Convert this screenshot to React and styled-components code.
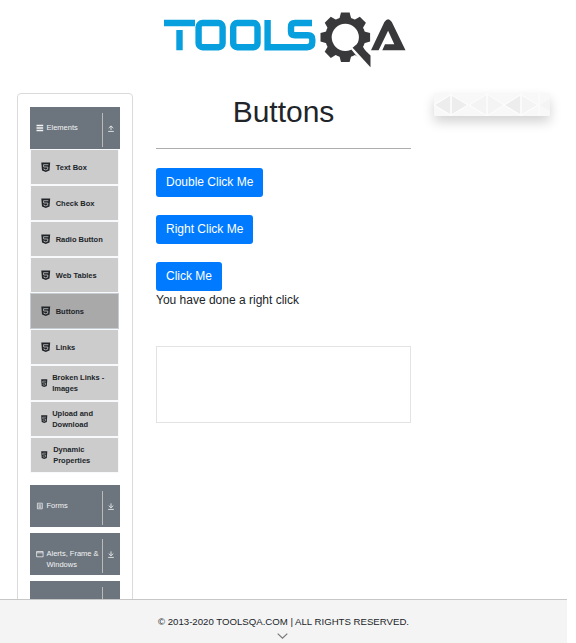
import React from 'react';
import styled, { createGlobalStyle, css } from 'styled-components';

const GlobalStyle = createGlobalStyle`
  *, *::before, *::after { box-sizing: border-box; }
  html, body { margin: 0; overflow: hidden; background: #fff; }
  body {
    font-family: "Liberation Sans", Arial, sans-serif;
    font-size: 12px;
    line-height: 18px;
    color: #212529;
  }
`;

const Page = styled.div`
  display: flex;
  flex-direction: column;
  width: 567px;
  height: 643px;
`;

const Header = styled.header`
  flex: none;
  display: flex;
  justify-content: center;
  height: 93px;
`;

const LogoSvg = styled.svg`
  display: block;
  width: 567px;
  height: 76px;
`;

const Body = styled.main`
  flex: 1;
  min-height: 0;
  overflow: hidden;
  display: grid;
  grid-template-columns: 116px 255px 116px;
  column-gap: 23px;
  padding-left: 17px;
  /* leaves room above the row for the banner's shadow */
  margin-top: -20px;
  padding-top: 20px;
`;

const Sidebar = styled.nav`
  height: 620px;
  padding: 13px 12px;
  border: 1px solid #dadada;
  border-radius: 4px;
`;

const GroupHeader = styled.div`
  display: flex;
  align-items: flex-start;
  width: 90px;
  height: 42px;
  padding: 15px 0 0 6px;
  background: #6c757d;
  color: #f2f3f4;
  font-size: 7.5px;
  line-height: 11px;
  margin-bottom: ${(p) => (p.$open ? 0 : 6)}px;
`;

const GroupIcon = styled.svg`
  flex: none;
  width: 8px;
  height: 8px;
  margin: 2px 2.5px 0 0;
`;

const GroupLabel = styled.span`
  width: 56px;
  white-space: nowrap;
`;

const Toggle = styled.span`
  flex: none;
  display: flex;
  align-items: center;
  justify-content: center;
  width: 18px;
  height: 34px;
  margin-top: -9px;
  border-left: 1px solid #bcbab5;

  svg { display: block; width: 6px; height: 7px; margin: -4px 0 0 -2px; }
`;

const ItemList = styled.ul`
  list-style: none;
  margin: 0 0 12px;
  padding: 0;
  width: 89px;
`;

const Item = styled.li`
  display: flex;
  align-items: center;
  height: 36px;
  padding-left: 10px;
  border: 1px solid #f8f9fa;
  background: #ccc;
  font-size: 7.5px;
  font-weight: 700;
  line-height: 11px;
  white-space: pre-line;

  svg {
    flex: none;
    width: ${(p) => (p.$small ? 6.5 : 9.5)}px;
    height: ${(p) => (p.$small ? 8 : 10)}px;
    margin-right: ${(p) => p.$gap ?? 5.2}px;
  }

  ${(p) => p.$active && css`
    background: #a9a9a9;
    border-color: #c5ccd4;
  `}
`;

const Content = styled.section`
  min-width: 0;
`;

const Title = styled.h1`
  margin: 0;
  height: 55px;
  padding-top: 1px;
  font-size: 30px;
  font-weight: 400;
  line-height: 36px;
  text-align: center;
`;

const Divider = styled.hr`
  margin: 0 0 19px;
  border: 0;
  border-top: 1px solid #adadad;
`;

const Actions = styled.div`
  display: flex;
  flex-direction: column;
  align-items: flex-start;
  gap: 18px;
`;

const Button = styled.button`
  height: 29px;
  padding: 0 10px 2px;
  border: 0;
  border-radius: 3px;
  background: #007bff;
  color: #fff;
  font: 12px/18px "Liberation Sans", Arial, sans-serif;
`;

const Message = styled.p`
  margin: 0;
`;

const EmptyFrame = styled.div`
  height: 77px;
  margin-top: 37px;
  border: 1px solid #e3e3e3;
`;

const Banner = styled.div`
  height: 23px;
  background: #f8f8f8;
  border-radius: 1px;
  box-shadow: 0 6px 12px rgba(0, 0, 0, 0.175);

  svg { display: block; width: 116px; height: 23px; }
`;

const Footer = styled.footer`
  flex: none;
  display: flex;
  flex-direction: column;
  align-items: center;
  height: 44px;
  padding-top: 16px;
  border-top: 1px solid #c7c7c7;
  background: #f4f4f4;
  font-size: 9.65px;
  line-height: 12px;

  svg { display: block; width: 11px; height: 6px; margin: 5px 3px 0 0; }
`;

const gearTeeth = [0, 45, 90, 135, 180, 225, 270, 315];

const Logo = () => (
  <LogoSvg viewBox="0 0 567 76" role="img" aria-label="ToolsQA">
    <g fill="none" stroke="#089fdf" strokeWidth="6.4">
      <path d="M164 23H195M179.5 30V50.3" />
      <rect x="198.6" y="23" width="24" height="24.2" rx="4" />
      <rect x="233.2" y="23" width="24.3" height="24.2" rx="4" />
      <path d="M267.6 20V47.2H307Q312.3 47.2 312.3 42V39.5Q312.3 35.2 308 35.2H295Q291 35.2 291 31.5V27Q291 23 295 23H312" />
    </g>
    <g fill="#39393b">
      <g transform="translate(345.3 37.3)">
        {gearTeeth.map((angle) => (
          <path key={angle} d="M-6.1-18L-4.3-24.8H4.3L6.1-18Z" transform={`rotate(${angle})`} />
        ))}
        <circle r="20.2" />
      </g>
      <circle cx="345.3" cy="37.3" r="13.6" fill="#fff" />
      <path d="M350.5 48.5L356.3 43.2L373 59V70L368 70Z" fill="#fff" />
      <path d="M352.6 47.7L357.9 43.2L370.5 55.5V67.3Z" />
      <path d="M371 50.2L384.4 22Q388.1 16.5 391.8 22L405.5 50.2H382.3L385 44.3H394.3L388.1 30.7L378.6 50.2Z" />
    </g>
  </LogoSvg>
);

const Html5Icon = () => (
  <svg viewBox="0 0 9.5 10" preserveAspectRatio="none">
    <path d="M.3.4H9.2L8.5 8.6L4.75 9.9L1 8.6Z" fill="#212529" />
    <path d="M7.4 2.7H2.5L2.7 5H6.8L6.6 7.3L4.75 7.9L2.9 7.3V6.5" fill="none" stroke="#bbb" strokeWidth=".85" />
  </svg>
);

const icons = {
  list: <path d="M.5 1.5H7.2M.5 4H7.2M.5 6.5H7.2" strokeWidth="1.3" />,
  form: <path d="M1.4 1.2H6.3V6.8H1.4ZM2.4 2.9H5.3M2.4 4.1H5.3M2.4 5.3H5.3" strokeWidth=".75" />,
  window: <path d="M.6 1.5H7.1V6.8H.6ZM.6 2.8H7.1" strokeWidth=".75" />,
  widget: <path d="M5 1L8 4L5 7L2 4Z" strokeWidth=".8" />,
};

const Group = ({ icon, label, open }) => (
  <GroupHeader $open={open}>
    <GroupIcon viewBox="0 0 8 8" fill="none" stroke="currentColor">{icons[icon]}</GroupIcon>
    <GroupLabel>{label}</GroupLabel>
    <Toggle>
      <svg viewBox="0 0 6 7" fill="none" stroke="currentColor" strokeWidth=".85">
        <path d={open ? 'M3 5V1M.7 3.1L3 .9L5.3 3.1M.2 6.4H5.8' : 'M3 .4V4.6M.7 2.6L3 4.8L5.3 2.6M.2 6.4H5.8'} />
      </svg>
    </Toggle>
  </GroupHeader>
);

const items = [
  { label: 'Text Box' },
  { label: 'Check Box' },
  { label: 'Radio Button' },
  { label: 'Web Tables' },
  { label: 'Buttons', active: true },
  { label: 'Links' },
  { label: 'Broken Links -\nImages', small: true, gap: 4.7 },
  { label: 'Upload and\nDownload', small: true, gap: 4.7 },
  { label: 'Dynamic\nProperties', small: true, gap: 5.7 },
];

export default function App() {
  return (
    <>
      <GlobalStyle />
      <Page>
        <Header><Logo /></Header>
        <Body>
          <Sidebar>
            <Group icon="list" label="Elements" open />
            <ItemList>
              {items.map((item) => (
                <Item key={item.label} $active={item.active} $small={item.small} $gap={item.gap}>
                  <Html5Icon />
                  <span>{item.label}</span>
                </Item>
              ))}
            </ItemList>
            <Group icon="form" label="Forms" />
            <Group icon="window" label={<>Alerts, Frame &amp;<br />Windows</>} />
            <Group icon="widget" />
          </Sidebar>
          <Content>
            <Title>Buttons</Title>
            <Divider />
            <Actions>
              <Button>Double Click Me</Button>
              <Button>Right Click Me</Button>
              <Button>Click Me</Button>
            </Actions>
            <Message>You have done a right click</Message>
            <EmptyFrame />
          </Content>
          <Banner>
            <svg viewBox="0 0 116 23">
              <path d="M1 12L16 3V21ZM18 3L33 12L18 21ZM71 12L86 3V21Z" fill="#ededed" />
              <path d="M36 12L52 2V22ZM54 2L69 12L54 22ZM88 3L103 12L88 21ZM106 12L116 6V18Z" fill="#f4f4f4" />
              <path d="M0 12L17 1.5L34 12L17 22.5ZM35 12L53 1L70 12L53 23ZM70 12L87 1.5L104 12L87 22.5ZM17 0V23M53 0V23M87 0V23M105 0V23" fill="none" stroke="#fdfdfd" />
            </svg>
          </Banner>
        </Body>
        <Footer>
          <span>© 2013-2020 TOOLSQA.COM | ALL RIGHTS RESERVED.</span>
          <svg viewBox="0 0 11 6" fill="none" stroke="#777" strokeWidth="1.2"><path d="M.7.6L5.5 5.1L10.3.6" /></svg>
        </Footer>
      </Page>
    </>
  );
}
